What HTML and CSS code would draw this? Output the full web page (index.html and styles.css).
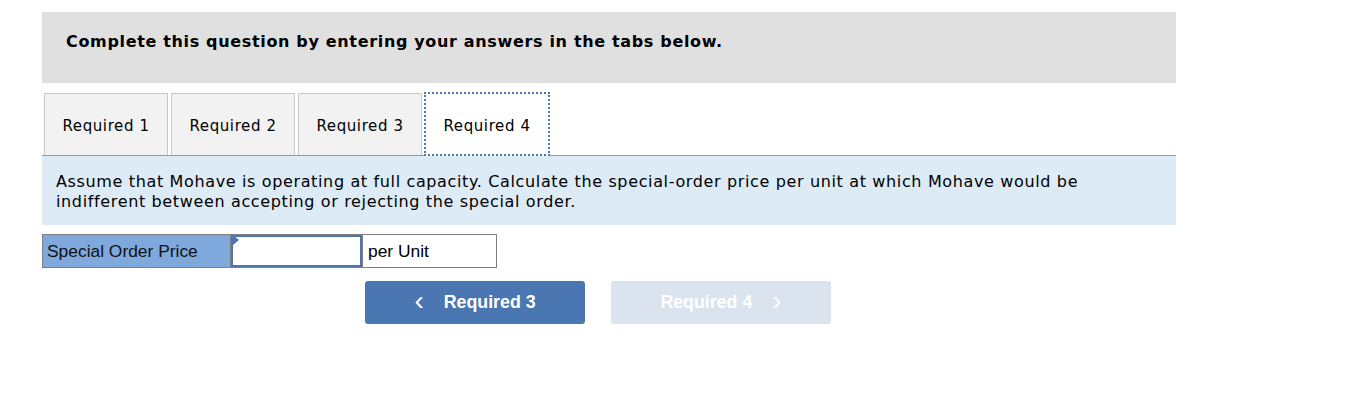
FILE: index.html
```html
<!DOCTYPE html>
<html>
<head>
<meta charset="utf-8">
<link rel="stylesheet" href="styles.css">
</head>
<body>
<div class="wrap">
  <div class="banner">Complete this question by entering your answers in the tabs below.</div>
  <div class="tabs">
    <div class="tab">Required 1</div>
    <div class="tab">Required 2</div>
    <div class="tab">Required 3</div>
    <div class="tab active">Required 4</div>
  </div>
  <div class="prompt">Assume that Mohave is operating at full capacity. Calculate the special-order price per unit at which Mohave would be indifferent between accepting or rejecting the special order.</div>
  <table class="grid">
    <tr>
      <td class="label">Special Order Price</td>
      <td class="input-cell"><div class="input"><span class="flag"></span></div></td>
      <td class="unit">per Unit</td>
    </tr>
  </table>
  <div class="nav">
    <button class="btn prev"><span class="chev">&lsaquo;</span>Required 3</button>
    <button class="btn next">Required 4<span class="chev">&rsaquo;</span></button>
  </div>
</div>
</body>
</html>
```
FILE: styles.css
```css
body {
  margin: 0;
  background: #fff;
  font-family: "DejaVu Sans", Verdana, sans-serif;
  color: #000;
}
.wrap {
  width: 1134px;
  margin-left: 42px;
  padding-top: 12px;
}
.banner {
  background: #e0e0e0;
  height: 71px;
  box-sizing: border-box;
  padding: 20px 24px 0;
  font-weight: bold;
  font-size: 16px;
  line-height: 20px;
  letter-spacing: 0.66px;
}
.tabs {
  display: flex;
  margin-top: 10px;
  padding-left: 2px;
  gap: 3px;
  border-bottom: 1px solid #9a9a9a;
  height: 62px;
  align-items: flex-end;
}
.tab {
  box-sizing: border-box;
  height: 62px;
  width: 124px;
  padding-top: 2px;
  background: #f2f2f2;
  border: 1px solid #c8c8c8;
  border-bottom: none;
  font-size: 15px;
  letter-spacing: 0.6px;
  display: flex;
  align-items: center;
  justify-content: center;
}
.tab.active {
  width: 126px;
  height: 64px;
  padding-top: 4px;
  margin-bottom: -1px;
  background: #fff;
  border: 2px dotted #4a76b2;
  margin-left: -1px;
}
.prompt {
  background: #ddebf7;
  height: 69px;
  box-sizing: border-box;
  padding: 16px 14px 0;
  font-size: 16px;
  line-height: 20px;
  letter-spacing: 0.64px;
}
.grid {
  border-collapse: collapse;
  margin-top: 9px;
  font-family: "Liberation Sans", Arial, sans-serif;
  font-size: 17.4px;
}
.grid td {
  border: 1px solid #808080;
  height: 32px;
  padding: 0;
}
.label {
  background: #7fa8dd;
  width: 183px;
  padding-left: 4px !important;
  color: #111;
}
.input-cell {
  width: 131px;
  background: #fff;
}
.input {
  position: relative;
  box-sizing: border-box;
  height: 32px;
  border: 2px solid #4a76b2;
  background: #fff;
}
.flag {
  position: absolute;
  left: 0;
  top: -2px;
  width: 0;
  height: 0;
  border-top: 5px solid transparent;
  border-bottom: 5px solid transparent;
  border-left: 6px solid #4a76b2;
}
.unit {
  width: 128px;
  padding-left: 5px !important;
}
.nav {
  display: flex;
  gap: 26px;
  margin-left: 323px;
  margin-top: 13px;
}
.btn {
  width: 220px;
  height: 43px;
  border: none;
  border-radius: 3px;
  font-family: "Liberation Sans", Arial, sans-serif;
  font-weight: bold;
  font-size: 17.8px;
  color: #fff;
  display: flex;
  align-items: center;
  justify-content: center;
  padding: 0;
}
.prev { background: #4a76b2; }
.next { background: #dae3ee; }
.chev {
  font-weight: normal;
  font-size: 28px;
  line-height: 1;
  position: relative;
  top: -2px;
}
.prev .chev { margin-right: 20px; }
.next .chev { margin-left: 20px; }
```
